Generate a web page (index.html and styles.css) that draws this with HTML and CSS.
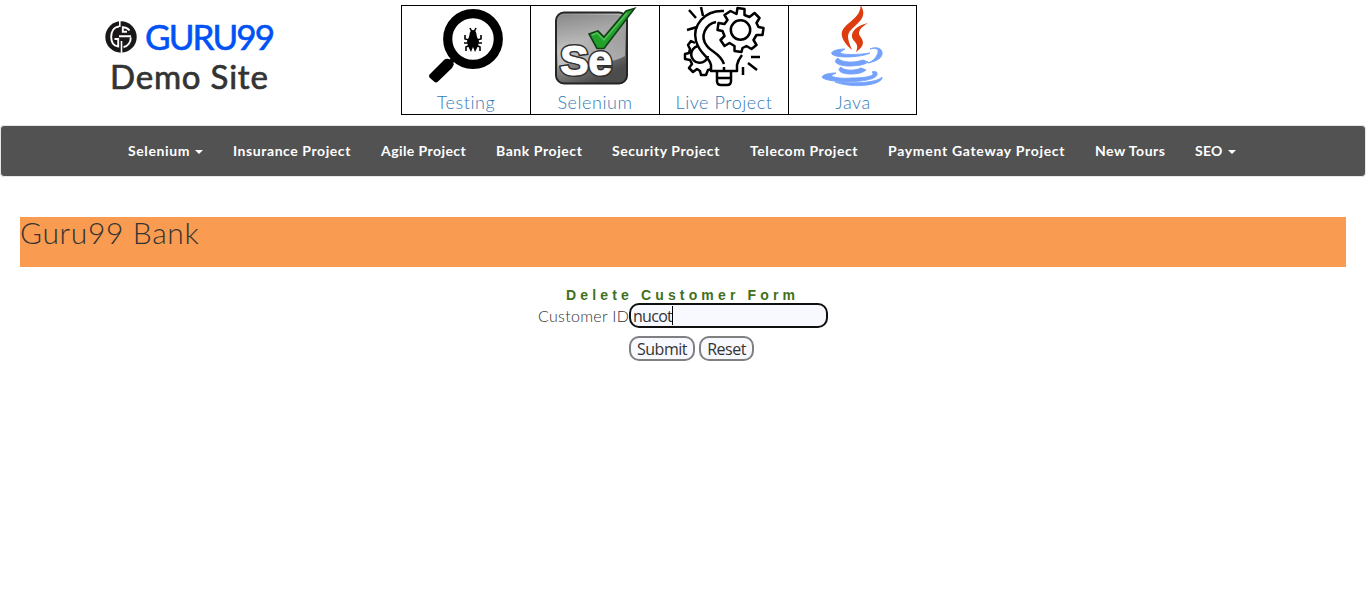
FILE: index.html
```
<!DOCTYPE html>
<html lang="en">
<head>
<meta charset="utf-8">
<title>Delete Customer</title>
<link rel="stylesheet" href="styles.css">
</head>
<body>
<header class="top">
  <div class="brand">
    <div class="logo">
      <svg class="mark" viewBox="0 0 32 32" width="32" height="32">
        <circle cx="16" cy="16" r="15.7" fill="#1a1718"/>
        <g fill="none" stroke="#fff">
          <path d="M14.800 0V6M16.500 20V32" stroke-width="1.600"/>
          <path d="M14 5.500C9 6 6.200 10.500 6.200 16S8.500 25 13.200 25.500V18H9.500" stroke-width="1.900"/>
          <path d="M18.500 26C23 25.500 25.800 21 25.800 16.500M24.500 9.500Q22 6.200 17.800 6.200V10.800H22M14 15.200H26" stroke-width="1.900"/>
        </g>
      </svg>
      <span class="name">GURU99</span>
    </div>
    <div class="site">Demo Site</div>
  </div>
  <nav class="tiles">
    <a class="tile">
      <svg viewBox="0 0 128 86" width="128" height="86">
        <circle cx="71" cy="33" r="25.300" fill="#fff" stroke="#000" stroke-width="9.200"/>
        <path d="M53 51L48 57" stroke="#000" stroke-width="5"/>
        <path d="M48 53.500Q51 57 52 58L50 62 36 75.500Q34 77.500 32 75.500L28 72Q26 70 28 68L42 54Q44.500 52 48 53.500z"/>
        <path d="M68 26q3-4 6 0l1 5 2 4-1 5-3 6-2-5-2 5-3-6-1-5 2-4z"/>
        <path d="M70 26l-2-4M72 26l2-4M67 34l-4-1v-4M75 34l4-1v-4M67 37h-5M75 37h5M68 39l-4 2v4M74 39l4 2v4" fill="none" stroke="#000" stroke-width="1.600"/>
      </svg>
      <span class="label">Testing</span>
    </a>
    <a class="tile">
      <svg viewBox="0 0 128 86" width="128" height="86">
        <defs><linearGradient id="grey" x1="0" y1="0" x2=".5" y2="1"><stop offset="0" stop-color="#8a8a8a"/><stop offset=".45" stop-color="#bcbcbc"/><stop offset=".65" stop-color="#888"/><stop offset="1" stop-color="#4c4c4c"/></linearGradient>
        <linearGradient id="sheen" x1="0" y1="0" x2="0" y2="1"><stop offset="0" stop-color="#888"/><stop offset="1" stop-color="#dedede"/></linearGradient></defs>
        <rect x="25" y="6.500" width="71" height="71" rx="8" fill="url(#grey)" stroke="#252525" stroke-width="2"/>
        <path d="M27 16q0-7 7-7h53q7 0 7 7v34Q82 57 70 55T27 61z" fill="url(#sheen)" opacity=".65"/>
        <text x="29" y="69" class="se">Se</text>
        <text x="29" y="69" class="se se-face">Se</text>
        <path d="M58 28L67 25 73 31 95 5 103.500 2.500 73 42.500H66z" fill="#22a02c" stroke="#123e16" stroke-width="1.600"/>
        <path d="M61 29l5-2 7 7 23-27" fill="none" stroke="#54bf59" stroke-width="1.500"/>
      </svg>
      <span class="label">Selenium</span>
    </a>
    <a class="tile">
      <svg viewBox="0 0 128 86" width="128" height="86" fill="none" stroke="#000" stroke-width="2.500" stroke-linejoin="round">
        <path d="M64 5C44 4 32 20 36 35C40 49 49 50 51 59V65H77V59Q78 54 82 49"/>
        <path d="M56 16C46 18 39 30 47 40C51 46 60 47 64 58M64 61V65"/>
        <path d="M57 66V75Q57 79 61 79H67Q71 79 71 75V66M57 72H71"/>
        <g transform="translate(80.500 24)">
          <path fill="#fff" d="M-4-16L-3-22 4-21 4-15 9-13 14-17 19-12 16-7 18-3 23-2 22 5 16 5 13 10 16 15 11 19 6 16 2 18 1 22-6 21-6 16-11 13-16 16-20 10-16 6-18 1-23 0-22-7-16-6-13-10-16-15-10-19z"/>
          <circle r="9.700"/>
        </g>
        <path d="M35 37L31 35 28 39 30 43 29 47 25 48 25 53 30 54 32 58 29 62 33 66 37 63 40 65 41 69 46 69 48 64 52 63M38 40A8.500 8.500 0 1 0 48 50"/>
        <path d="M41 1L43 10M29 4L36 12M27 24L37 21M91 51H100M88 57L97 64M83 61V69"/>
      </svg>
      <span class="label">Live Project</span>
    </a>
    <a class="tile">
      <svg viewBox="0 0 128 86" width="128" height="86">
        <g fill="#de3b0e"><path d="M71.500-1C72 7 66 12 60 17C54 22 50 27 55 35C58 40 61 42 63 44C59 34 57 29 62 24C67 18 80 12 71.500-1z"/><path d="M79 17C69 19 62 25 63 31C64 36 71 37 67 46C76 40 75 35 71 30C68 26 72 21 79 17z"/></g>
        <g fill="#73a1fb" stroke="#73a1fb" stroke-width=".9" transform="translate(1)">
          <path d="M55 43C46 43 40 46 42 48C46 53 74 51 80 47C67 49 54 49 50 47C50 46 52 45 55 43zM80 43C87 41 90 44 87 49C85 53 83 55 78 57C88 55 93 51 92 46C91 41 84 41 80 43z"/>
          <path d="M48 52C43 55 45 59 57 60C68 60 74 59 78 56L73 54C65 57 51 57 48 52zM51 61C46 64 51 68 60 68C68 68 72 67 76 64L71 62C65 65 54 65 51 61z"/>
          <path d="M46 67C35 67 28 71 35 73C49 78 88 76 87 68C88 65 83 65 82 66C87 70 75 72 62 72C50 73 40 71 42 69zM92 71C88 76 69 78 45 76C64 83 93 79 92 71z"/>
        </g>
      </svg>
      <span class="label">Java</span>
    </a>
  </nav>
</header>
<nav class="bar">
  <a class="n1">Selenium<i class="caret"></i></a>
  <a class="n2">Insurance Project</a>
  <a class="n3">Agile Project</a>
  <a class="n4">Bank Project</a>
  <a class="n5">Security Project</a>
  <a class="n6">Telecom Project</a>
  <a class="n7">Payment Gateway Project</a>
  <a class="n8">New Tours</a>
  <a class="n9">SEO<i class="caret"></i></a>
</nav>
<main>
  <h2 class="bank">Guru99 Bank</h2>
  <form class="form">
    <p class="title">Delete Customer Form</p>
    <label class="cid">Customer ID</label>
    <div class="field"><span>nucot</span><i class="cursor"></i></div>
    <div class="buttons"><button type="button" class="b1">Submit</button><button type="button" class="b2">Reset</button></div>
  </form>
</main>
</body>
</html>
```
FILE: styles.css
```
* { box-sizing: border-box; }
body { margin: 0; background: #fff; color: #333; font-family: Lato, sans-serif; }
.top { display: flex; height: 125px; padding: 5px 0 0 105px; }
.brand { width: 296px; padding-top: 16px; }
.logo { display: flex; align-items: center; height: 32px; }
.name { margin-left: 8px; margin-bottom: 2px; color: #0052f5; font-size: 35px; line-height: 32px; letter-spacing: -1.9px; -webkit-text-stroke: .6px #0052f5; }
.site { padding-left: 5px; margin-top: 4px; font-size: 33px; line-height: 38px; letter-spacing: .8px; -webkit-text-stroke: .7px #333; white-space: nowrap; }
.tiles { display: grid; grid-template-columns: repeat(4, 129px); width: 516px; height: 110px; border: 1px solid #000; }
.tile { display: flex; flex-direction: column; align-items: center; height: 108px; border-right: 1px solid #000; }
.tile:last-child { border-right: 0; width: 128px; }
.tile svg { display: block; flex: none; }
.label { font-size: 18px; line-height: 20px; font-weight: 300; color: #337ab7; white-space: nowrap; letter-spacing: .55px; }
.se { font: bold 43px "Liberation Sans", sans-serif; fill: #fff; stroke: #303030; stroke-width: 4px; letter-spacing: -.5px; }
.se-face { stroke: #fff; stroke-width: 1px; }
.bar { display: grid; grid-template-columns: 105px 148px 115px 116px 138px 138px 207px 100px 80px; height: 52px; padding-left: 127px; border: 1px solid #e7e7e7; border-radius: 4px; background: #525252; }
.bar a { display: flex; align-items: center; color: #fff; font-size: 14px; font-weight: 700; line-height: 50px; white-space: nowrap; letter-spacing: .5px; }
.bar .n1 { letter-spacing: .6px; }
.bar .n2, .bar .n5 { letter-spacing: .57px; }
.bar .n3 { letter-spacing: .42px; }
.bar .n4, .bar .n6 { letter-spacing: .57px; }
.bar .n7 { letter-spacing: .7px; }
.bar .n9 { letter-spacing: .3px; }
.caret { margin-left: 5px; margin-top: 2px; border: 4px solid transparent; border-top-color: #fff; border-bottom: 0; }
main { padding: 40px 20px 0; }
.bank { margin: 0; height: 50px; background: #f99b50; font-size: 30px; line-height: 31px; font-weight: 300; letter-spacing: .65px; }
.form { display: grid; grid-template-columns: 92px 199px; grid-template-rows: 16px 25px 33px; width: 291px; margin: 20px 0 0 517px; }
.title { grid-column: 1 / 3; margin: 0; padding-left: 29px; color: #3f711c; font: bold 14px/16px "Liberation Sans", sans-serif; letter-spacing: 4.15px; white-space: nowrap; }
.cid { padding-left: 1px; font-size: 16px; font-weight: 300; line-height: 25px; white-space: nowrap; letter-spacing: .3px; }
.field { display: flex; align-items: center; height: 25px; padding-left: 2px; border: 2px solid #101010; border-radius: 10px; background: #f8f8ff; font: 16px "Open Sans", sans-serif; letter-spacing: -.7px; }
.cursor { width: 1px; height: 19px; background: #000; }
.buttons { grid-column: 2; display: flex; gap: 4px; margin-top: 8px; }
.buttons button { height: 25px; padding: 0; border: 2px solid #808080; border-radius: 10px; background: #f8f8ff; color: #333; font: 16px/20px "Open Sans", sans-serif; letter-spacing: -.5px; }
.buttons .b1 { width: 66px; }
.buttons .b2 { width: 55px; }
```
